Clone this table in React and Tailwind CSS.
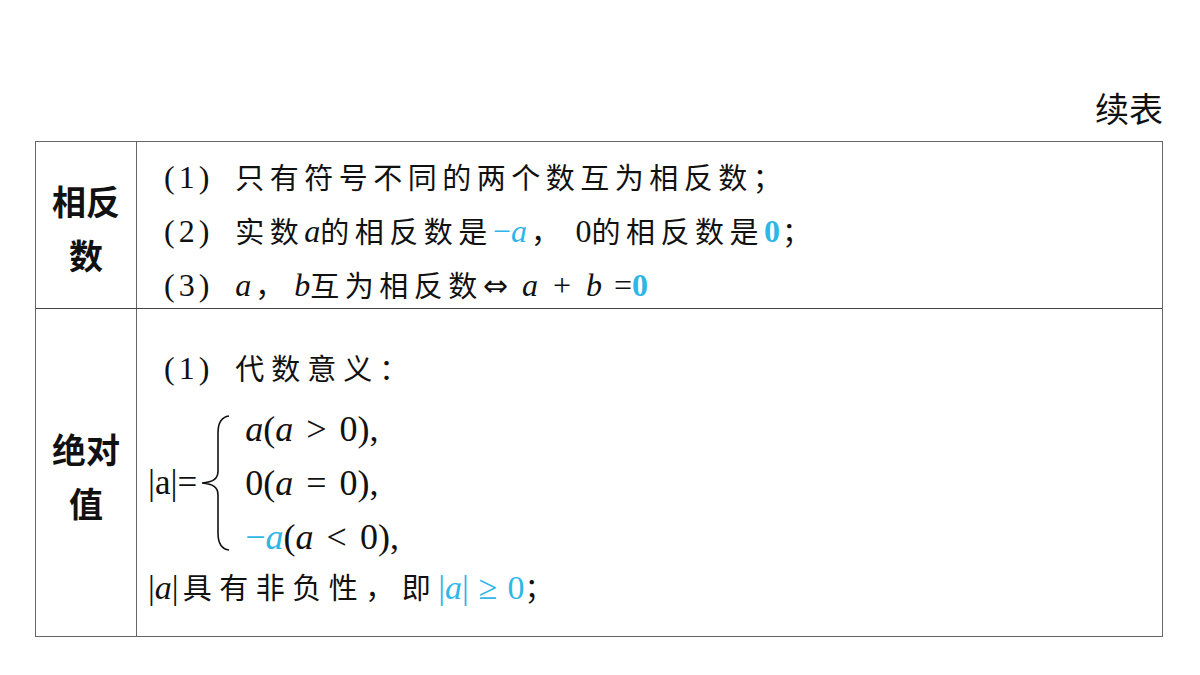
const serif = { fontFamily: '"Liberation Serif", "Noto Sans CJK SC", serif' }
const cjk = { fontFamily: '"Noto Sans CJK SC", sans-serif' }

const Blue = ({ children, className = '' }) => (
    <span className={`text-[#2fb6e9] ${className}`}>{children}</span>
)

const I = ({ children }) => <span className="italic">{children}</span>

// chinese run, spaced out like the kai-font original
const C = ({ children, className = 'tracking-[5.5px]' }) => (
    <span className={`text-[29px] ${className}`} style={cjk}>{children}</span>
)

const Op = ({ children, className = 'mx-[13px]' }) => <span className={className}>{children}</span>

const Line = ({ children, className = '' }) => (
    <div className={`h-[54px] flex items-center whitespace-nowrap ${className}`}>{children}</div>
)

const Num = ({ n }) => <span className="tracking-[4px] mr-[22px]">({n})</span>

const Brace = () => (
    <svg width="29" height="138" viewBox="0 0 29 138" className="shrink-0">
        <path
            d="M28 2 C20 3 17 9 17 19 L17 57 C17 65 12 68 1 69 C12 70 17 73 17 81 L17 119 C17 129 20 135 28 136"
            fill="none"
            stroke="#111"
            strokeWidth="1.6"
        />
    </svg>
)

const App = () => {
    return (
        <div className="w-[1200px] h-[675px] bg-white text-[#111] relative overflow-hidden" style={serif}>
            <div className="pt-[86px] pr-[37px] flex justify-end h-[141px]">
                <span className="text-[34px] leading-[44px]" style={cjk}>续表</span>
            </div>
            <div className="mx-[35px] w-[1128px] border border-[#666]">
                {/* row 1 */}
                <div className="flex h-[167px] border-b border-[#444]">
                    <div className="w-[101px] shrink-0 border-r border-[#666] flex flex-col items-center justify-center pt-[6px] font-bold text-[34px] leading-[54px]" style={cjk}>
                        <div>相反</div>
                        <div>数</div>
                    </div>
                    <div className="flex-1 pl-[27px] pt-[8px] text-[32px]">
                        <Line><Num n="1" /><C>只有符号不同的两个数互为相反数；</C></Line>
                        <Line><Num n="2" /><C>实数</C><I>a</I><C>的相反数是</C><Blue>−<I>a</I></Blue><C className="tracking-[5.5px] ml-[4px] mr-[10px]">，</C>0<C>的相反数是</C><Blue className="font-bold">0</Blue><C className="ml-[2px]">；</C></Line>
                        <Line><Num n="3" /><I>a</I><C className="tracking-[6px] mx-[4px]">，</C><I>b</I><C>互为相反数</C><span className="text-[30px]" style={{ fontFamily: '"DejaVu Sans", sans-serif' }}>⇔</span><span className="ml-[14px]"><I>a</I></span><Op className="mx-[15px]">+</Op><I>b</I><span className="ml-[12px]">=</span><Blue className="font-bold">0</Blue></Line>
                    </div>
                </div>
                {/* row 2 */}
                <div className="flex h-[327px]">
                    <div className="w-[101px] shrink-0 border-r border-[#666] flex flex-col items-center justify-center pt-[6px] font-bold text-[34px] leading-[54px]" style={cjk}>
                        <div>绝对</div>
                        <div>值</div>
                    </div>
                    <div className="flex-1 pl-[11px] pt-[32px] text-[32px]">
                        <Line className="pl-[16px]"><Num n="1" /><C className="tracking-[7px]">代数意义：</C></Line>
                        <div className="flex items-center mt-[7px]">
                            <span className="mr-[4px] text-[35px]">|a|=</span>
                            <Brace />
                            <div className="ml-[15px] text-[36px]">
                                <Line><I>a</I>(<I>a</I><Op>&gt;</Op>0),</Line>
                                <Line>0(<I>a</I><Op>=</Op>0),</Line>
                                <Line><Blue>−<I>a</I></Blue>(<I>a</I><Op>&lt;</Op>0),</Line>
                            </div>
                        </div>
                        <Line className="-mt-[4px] text-[34px]">|<I>a</I>|<C className="tracking-[7.5px] ml-[4px]">具有非负性，即</C><Blue>|<I>a</I>|<Op className="mx-[10px]">≥</Op>0</Blue><C>；</C></Line>
                    </div>
                </div>
            </div>
        </div>
    )
}

export default App
